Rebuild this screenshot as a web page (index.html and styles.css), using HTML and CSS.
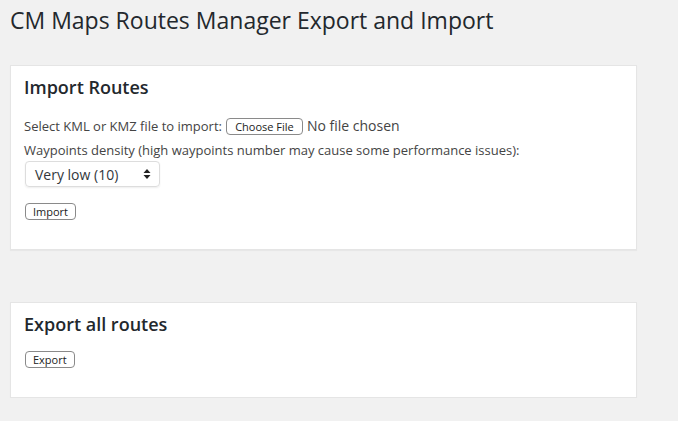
FILE: index.html
```html
<!DOCTYPE html>
<html>
  <head>
    <link rel="stylesheet" href="styles.css">
  </head>
  <body>
    <div class="wrap">
      <h1>CM Maps Routes Manager Export and Import</h1>

      <div class="postbox">
        <h3>Import Routes</h3>
        <div class="row">
          <span>Select KML or KMZ file to import:</span>
          <button type="button" class="mac-btn file-btn">Choose File</button>
          <span class="file-name">No file chosen</span>
        </div>
        <div class="row note">Waypoints density (high waypoints number may cause some performance issues):</div>
        <div class="select">
          <span>Very low (10)</span>
          <svg width="8" height="12" viewBox="0 0 8 12">
            <path d="M4 1 L7.5 5 L0.5 5 Z" fill="#222" />
            <path d="M4 11 L7.5 7 L0.5 7 Z" fill="#222" />
          </svg>
        </div>
        <button type="button" class="mac-btn">Import</button>
      </div>

      <div class="postbox second">
        <h3>Export all routes</h3>
        <button type="button" class="mac-btn">Export</button>
      </div>
    </div>
  </body>
</html>
```

FILE: styles.css
```css
body {
  margin: 0;
  background-color: #f1f1f1;
  font-family: "Open Sans", sans-serif;
  color: #444;
  font-size: 13px;
}
.wrap {
  padding: 0 41px 0 10px;
}
h1 {
  font-size: 23px;
  font-weight: 400;
  color: #23282d;
  margin: 0;
  padding: 5px 0 0 0;
  line-height: 30px;
}
.postbox {
  background: #fff;
  border: 1px solid #e5e5e5;
  box-shadow: 0 1px 1px rgba(0, 0, 0, 0.04);
  margin-top: 30px;
  padding: 9px 13px 29px 13px;
}
.postbox.second {
  margin-top: 52px;
  padding-bottom: 29px;
}
h3 {
  font-size: 18px;
  font-weight: 600;
  color: #23282d;
  margin: 0 0 14px 0;
  line-height: 24px;
}
.second h3 {
  margin-bottom: 15px;
}
.row {
  line-height: 26px;
  display: flex;
  align-items: center;
  color: #444;
}
.row.note {
  line-height: 20px;
  margin-top: 1px;
}
.mac-btn {
  font-family: "Open Sans", sans-serif;
  font-size: 11px;
  color: #222;
  background: #fff;
  border: 1px solid #8a8a8a;
  border-radius: 4px;
  height: 17px;
  line-height: 15px;
  padding: 0 7px;
  margin: 0 0 0 1px;
  display: block;
}
.file-btn {
  display: inline-block;
  margin: 0 4px 0 4px;
  width: 77px;
}
.file-name {
  font-size: 14px;
}
.select {
  display: flex;
  align-items: center;
  justify-content: space-between;
  width: 116px;
  height: 24px;
  padding: 0 8px 0 9px;
  margin: 1px 0 16px 1px;
  border: 1px solid #ddd;
  border-radius: 4px;
  font-size: 14px;
  color: #32373c;
  box-shadow: 0 1px 2px rgba(0, 0, 0, 0.07);
}
```
